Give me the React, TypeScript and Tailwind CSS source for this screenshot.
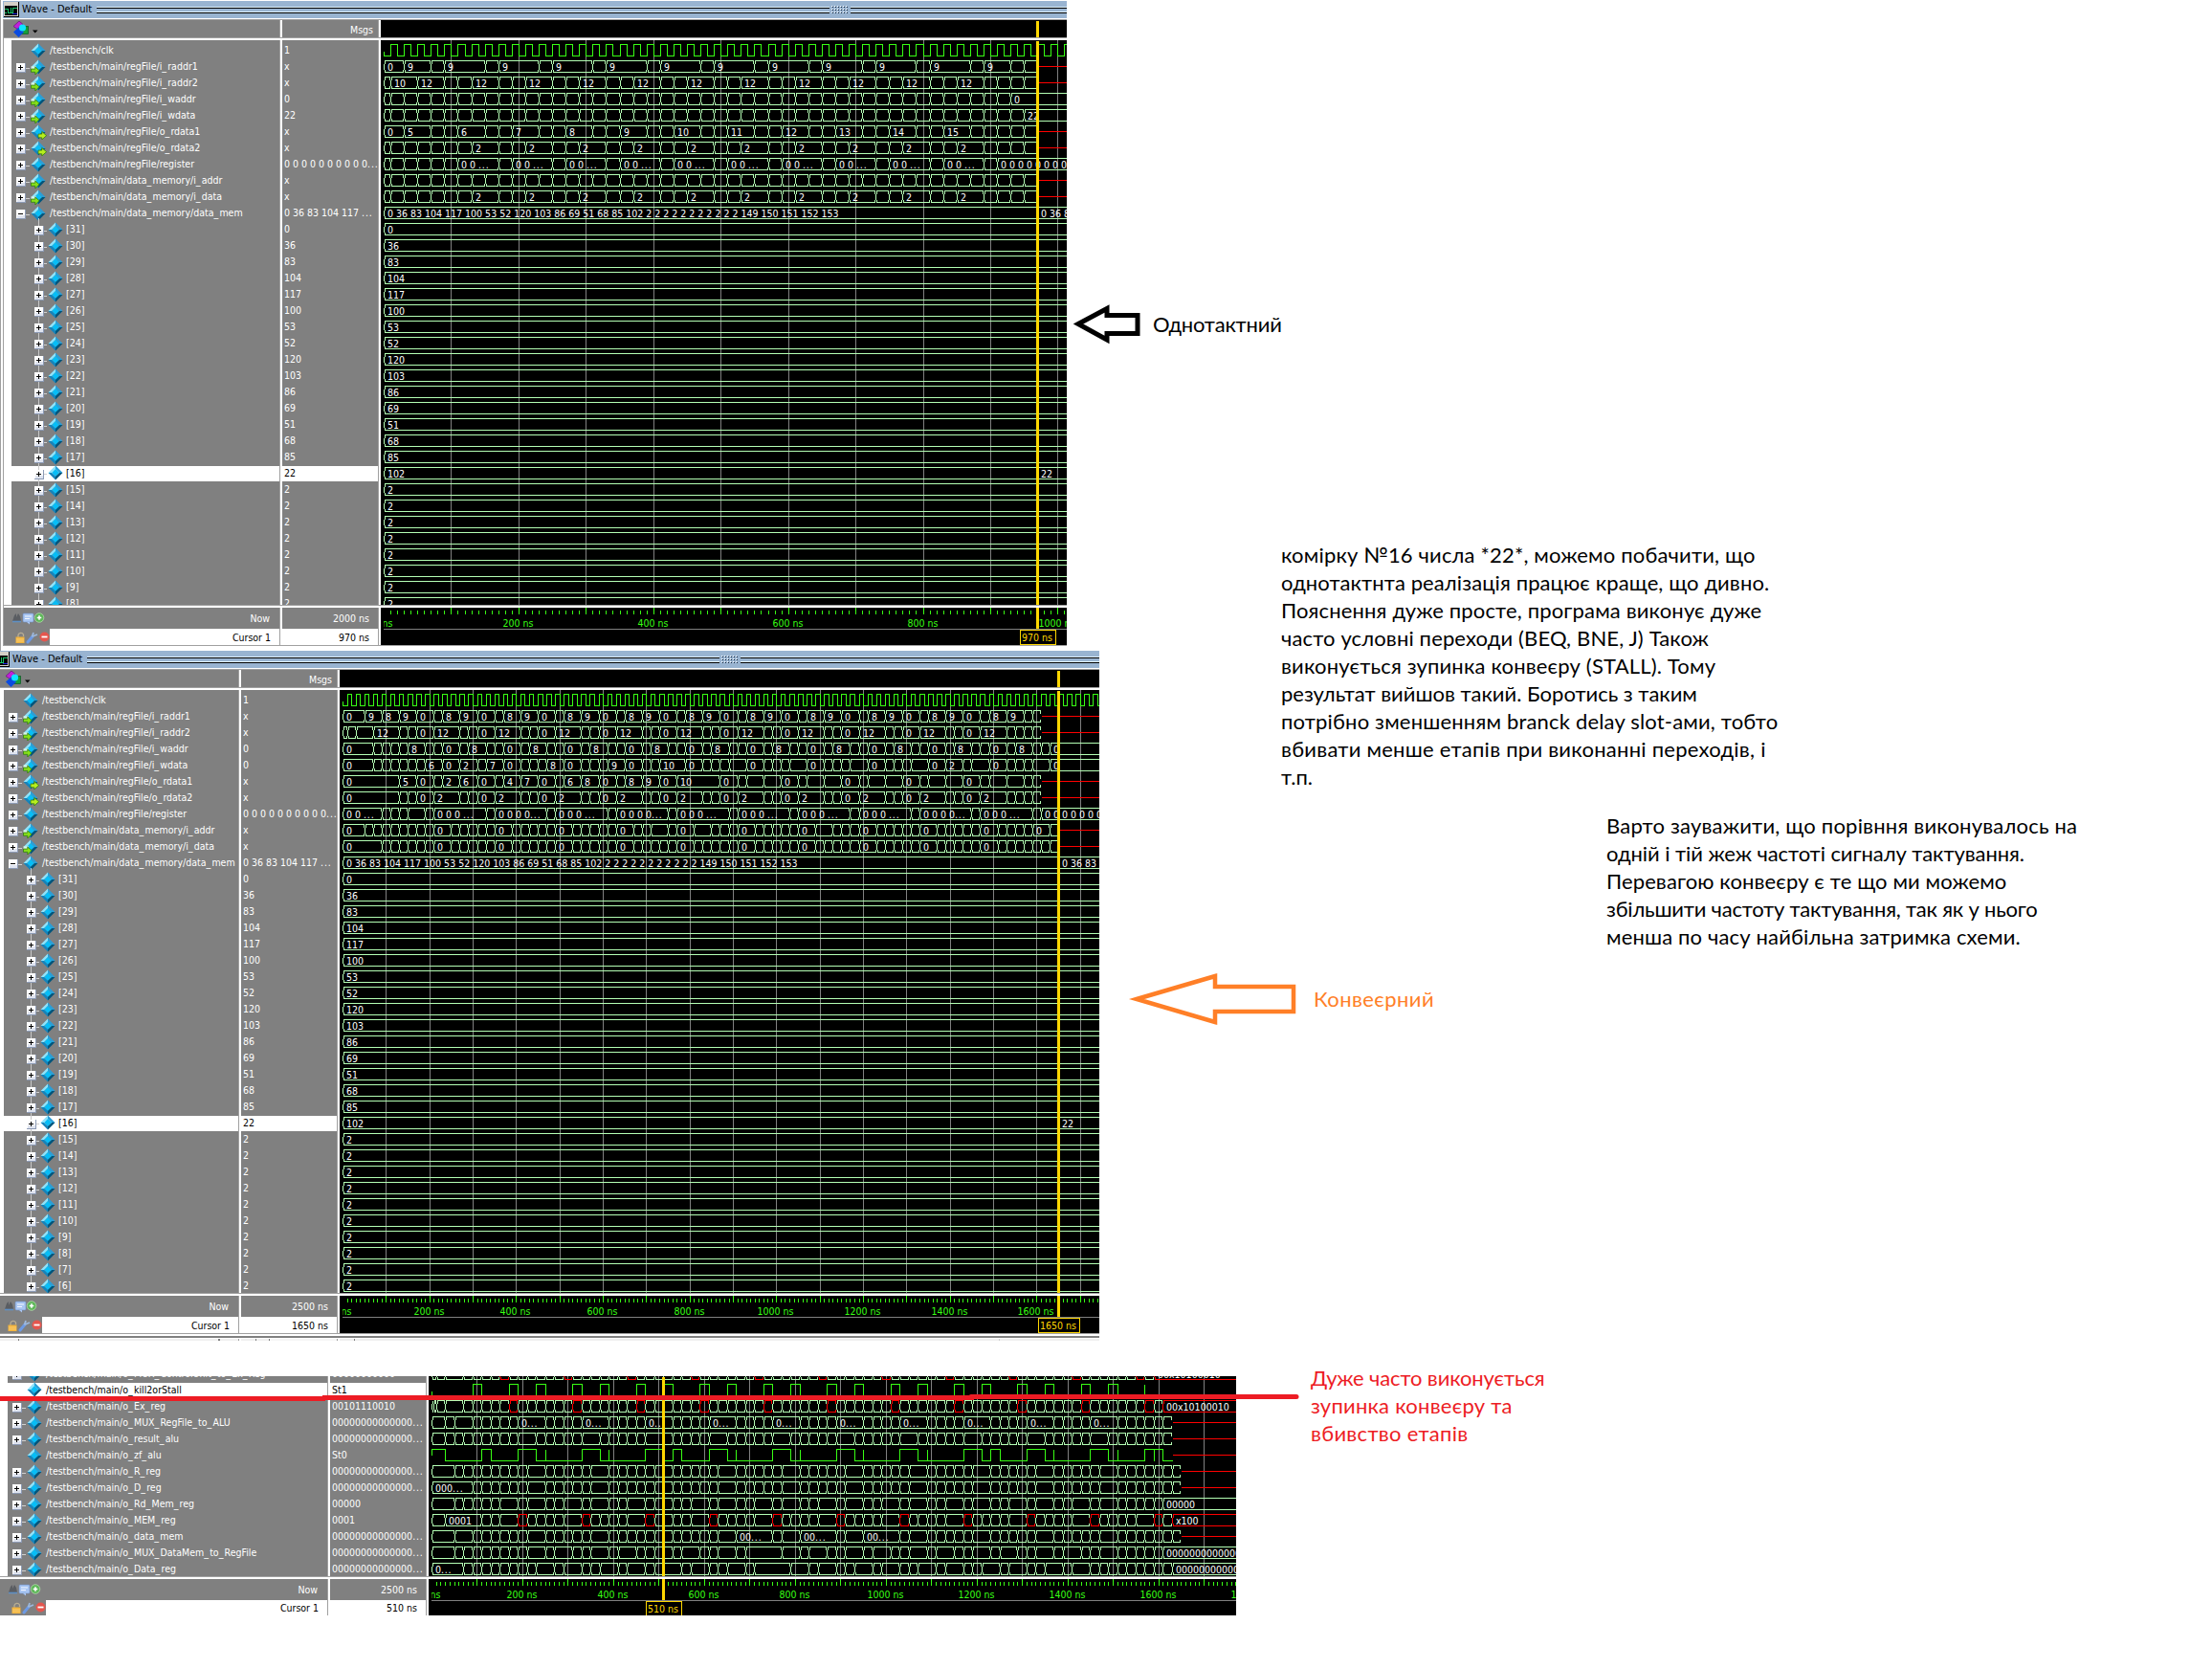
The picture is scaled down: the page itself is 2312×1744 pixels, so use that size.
import type { ReactNode } from "react";

/* ---------- shared types ---------- */

type Kind = "logic" | "in" | "out" | "plain" | "open" | "child";
type Signal = { name: string; value: string; kind: Kind; selected?: boolean };
type Cell = { t: number; label?: string; red?: boolean };
type Bus = { type: "bus"; cells: Cell[]; deadFrom?: number };
type Level = { type: "level"; edges: number[]; spikes?: number[]; start: number; end: number; deadFrom?: number };
type Wave = Bus | Level;

/* ---------- wave data helpers ---------- */

const bus = (
  times: number[],
  labels: Record<number, string> = {},
  deadFrom?: number,
  reds: number[] = [],
): Bus => ({
  type: "bus",
  deadFrom,
  cells: Array.from(new Set(times))
    .sort((a, b) => a - b)
    .map((t) => ({ t, label: labels[t], red: reds.includes(t) })),
});

const range = (from: number, to: number, step: number) => {
  const out: number[] = [];
  for (let t = from; t <= to; t += step) out.push(t);
  return out;
};
const repeat = (offsets: number[], from: number, to: number, period: number) =>
  range(from, to, period).flatMap((b) => offsets.map((o) => b + o));
const label = (times: number[], text: string) =>
  Object.fromEntries(times.map((t) => [t, text])) as Record<number, string>;
const without = (times: number[], drop: number[]) => times.filter((t) => !drop.includes(t));

const MEM = "0 36 83 104 117 100 53 52 120 103 86 69 51 68 85 102 2 2 2 2 2 2 2 2 2 2 2 149 150 151 152 153";
const MEM_VALUES = [0, 36, 83, 104, 117, 100, 53, 52, 120, 103, 86, 69, 51, 68, 85, 102, 2, 2, 2, 2, 2, 2, 2, 2, 2, 2];

const memSignals = (last: number): Signal[] =>
  range(0, 31 - last, 1).map((i) => ({
    name: `[${31 - i}]`,
    value: i === 15 ? "22" : String(MEM_VALUES[i]),
    kind: "child",
    selected: i === 15,
  }));
const memWaves = (last: number, changeAt: number): Wave[] =>
  range(0, 31 - last, 1).map((i) =>
    i === 15 ? bus([0, changeAt], { 0: "102", [changeAt]: "22" }) : bus([0], { 0: String(MEM_VALUES[i]) }),
  );

const cpuSignals = (waddr: string, wdata: string): Signal[] => [
  { name: "/testbench/clk", value: "1", kind: "logic" },
  { name: "/testbench/main/regFile/i_raddr1", value: "x", kind: "in" },
  { name: "/testbench/main/regFile/i_raddr2", value: "x", kind: "in" },
  { name: "/testbench/main/regFile/i_waddr", value: waddr, kind: "in" },
  { name: "/testbench/main/regFile/i_wdata", value: wdata, kind: "in" },
  { name: "/testbench/main/regFile/o_rdata1", value: "x", kind: "out" },
  { name: "/testbench/main/regFile/o_rdata2", value: "x", kind: "out" },
  { name: "/testbench/main/regFile/register", value: "0 0 0 0 0 0 0 0 0 0...", kind: "plain" },
  { name: "/testbench/main/data_memory/i_addr", value: "x", kind: "in" },
  { name: "/testbench/main/data_memory/i_data", value: "x", kind: "in" },
  { name: "/testbench/main/data_memory/data_mem", value: "0 36 83 104 117 ...", kind: "open" },
];

const clock = (end: number): Level => ({ type: "level", edges: range(10, end, 10), start: 0, end });

/* single-cycle core */
const read2 = [0, 10, ...repeat([0, 20, 40], 90, 850, 80), 890, 910, 930, 950];
const singleWaves: Wave[] = [
  clock(1020),
  bus([0, ...repeat([0, 20], 70, 870, 80), 30, 930, 950], { 0: "0", 30: "9", ...label(range(90, 890, 80), "9") }, 970),
  bus([...read2, 50], { 10: "10", 50: "12", ...label(range(130, 850, 80), "12") }, 970),
  bus([0, ...range(10, 930, 20)], { 930: "0" }),
  bus([0, ...range(10, 950, 20)], { 950: "22" }),
  bus(
    [0, 30, ...repeat([0, 20, 40], 70, 870, 80), 930, 950],
    {
      0: "0",
      30: "5",
      ...Object.fromEntries(range(0, 9, 1).map((k) => [110 + 80 * k, String(6 + k)])),
    },
    970,
  ),
  bus([...read2, 30, 50, 70], label(range(130, 850, 80), "2"), 970),
  bus([0, 10, 30, 50, 70, 90, ...repeat([0, 60], 110, 830, 80), 910], {
    ...label(range(110, 830, 80), "0 0 ..."),
    910: "0 0 0 0 0 0 0 0 0",
  }),
  bus([0, ...range(10, 950, 20)], {}, 970),
  bus([...read2, 30, 50, 70], label(range(130, 850, 80), "2"), 970),
  bus([0, 970], { 0: MEM, 970: "0 36 83 104" }),
  ...memWaves(8, 970),
];

/* pipelined core */
const pipeRead = [...repeat([0, 60, 80, 100], 70, 1330, 140), 1470, 1530, 1550, 1570, 1590];
const pipeWaves: Wave[] = [
  clock(1760),
  bus(
    [0, 50, ...repeat([0, 40, 80, 120], 90, 1350, 140), 1490, 1530, 1570, 1590],
    {
      0: "0",
      50: "9",
      ...label(range(90, 1490, 140), "8"),
      ...label(range(130, 1530, 140), "9"),
      ...label(range(170, 1430, 140), "0"),
    },
    1610,
  ),
  bus([0, 10, 30, ...pipeRead], { ...label(range(70, 1470, 140), "12"), ...label(range(170, 1430, 140), "0") }, 1610),
  bus([0, 70, 90, 110, 130, ...repeat([0, 40, 60, 80, 120], 150, 1410, 140), 1550, 1590, 1610, 1630], {
    0: "0",
    ...label(range(150, 1550, 140), "8"),
    ...label(range(230, 1490, 140), "0"),
    1630: "0",
  }),
  bus(
    [
      0, 70, 90, 110, 130, 150, 170, 190, 230, 270, 310, 330, 370, 410, 430, 450, 470, 510, 550, 570, 590, 610, 650,
      690, 710, 730, 790, 830, 850, 870, 890, 930, 970, 990, 1010, 1030, 1070, 1110, 1130, 1150, 1170, 1210, 1250,
      1270, 1290, 1310, 1350, 1390, 1430, 1450, 1490, 1530, 1550, 1570, 1590, 1630,
    ],
    {
      0: "0", 190: "6", 270: "2", 330: "7", 470: "8", 610: "9", 730: "10", 1390: "2", 1630: "0",
      ...label(range(230, 1490, 140), "0"),
    },
  ),
  bus(
    [
      0, 130, 170, 210, 230, 270, 310, 350, 370, 410, 450, 490, 510, 550, 590, 630, 650, 690, 730, 770, 870, 910, 930,
      970, 1010, 1050, 1070, 1110, 1150, 1190, 1210, 1250, 1290, 1330, 1350, 1390, 1430, 1470, 1490, 1530, 1570, 1590,
    ],
    {
      0: "0", 130: "5", 230: "2", 270: "6", 370: "4", 410: "7", 510: "6", 550: "8", 650: "8", 690: "9", 770: "10",
      ...label(range(170, 1430, 140), "0"),
    },
    1610,
  ),
  bus(
    [0, ...without(pipeRead, [70])],
    { 0: "0", ...label(range(210, 1470, 140), "2"), ...label(range(170, 1430, 140), "0") },
    1610,
  ),
  bus([0, 90, 110, 130, 150, 190, ...repeat([0, 120], 210, 1470, 140), 1610], {
    0: "0 0 ...",
    ...label(range(210, 1470, 140), "0 0 0 ..."),
    350: "0 0 0 0...",
    630: "0 0 0 0...",
    1330: "0 0 0 0...",
    1610: "0 0 0 0 0 0 0 0",
  }),
  bus(
    [0, ...without(range(50, 1630, 20), [...range(230, 1490, 140), 730, 830, 1110, 1610])],
    { 0: "0", ...label(range(210, 1470, 140), "0"), 1590: "0" },
    1650,
  ),
  bus(
    [0, ...without(range(90, 1630, 20), range(230, 1490, 140))],
    { 0: "0", ...label(range(210, 1470, 140), "0") },
    1650,
  ),
  bus([0, 1650], { 0: MEM, 1650: "0 36 83 104" }),
  ...memWaves(6, 1650),
];

/* pipeline registers */
const WORD = "00000000000000...";
const stageSignals: Signal[] = [
  { name: "/testbench/main/o_MUX_ControlUnit_to_Ex_Reg", value: "00000000000", kind: "plain" },
  { name: "/testbench/main/o_kill2orStall", value: "St1", kind: "logic", selected: true },
  { name: "/testbench/main/o_Ex_reg", value: "00101110010", kind: "plain" },
  { name: "/testbench/main/o_MUX_RegFile_to_ALU", value: WORD, kind: "plain" },
  { name: "/testbench/main/o_result_alu", value: WORD, kind: "plain" },
  { name: "/testbench/main/o_zf_alu", value: "St0", kind: "logic" },
  { name: "/testbench/main/o_R_reg", value: WORD, kind: "plain" },
  { name: "/testbench/main/o_D_reg", value: WORD, kind: "plain" },
  { name: "/testbench/main/o_Rd_Mem_reg", value: "00000", kind: "plain" },
  { name: "/testbench/main/o_MEM_reg", value: "0001", kind: "plain" },
  { name: "/testbench/main/o_data_mem", value: WORD, kind: "plain" },
  { name: "/testbench/main/o_MUX_DataMem_to_RegFile", value: WORD, kind: "plain" },
  { name: "/testbench/main/o_Data_reg", value: WORD, kind: "plain" },
];
const wide = (start: number) => range(start + 20, 1500, 140);
const stageWaves: Wave[] = [
  bus([0, 10, 30, ...range(70, 1590, 20)], { 1590: "00x10100010" }, undefined, [...range(150, 1550, 140), 1590]),
  { type: "level", start: 0, end: 1900, edges: repeat([0, 20, 80, 100], 90, 1350, 140).concat([1490, 1510]), spikes: [1570] },
  bus([0, 5, 10, 30, ...range(70, 1610, 20)], { 1610: "00x10100010" }, undefined, [...range(170, 1570, 140), 1610]),
  bus(
    [0, 30, 50, ...without(range(90, 1610, 20), [...range(210, 1490, 140), ...range(230, 1490, 140)])],
    label(range(190, 1450, 140), "0..."),
    1630,
  ),
  bus([0, ...without(range(30, 1610, 20), wide(190))], {}, 1630),
  {
    type: "level",
    start: 1,
    end: 1630,
    edges: [
      30, 110, 130, 190, 230, 330, 370, 470, 510, 530, 550, 610, 650, 750, 790, 890, 930, 1030, 1070, 1170, 1210, 1230,
      1250, 1310, 1350, 1450, 1490, 1570, 1610,
    ],
    spikes: [250, 390, 670, 810, 950, 1090, 1370, 1510, 1590],
    deadFrom: 1630,
  },
  bus([0, ...without(range(50, 1630, 20), wide(210))], {}, 1650),
  bus([0, ...without(range(90, 1630, 20), wide(210))], { 0: "000..." }, 1650),
  bus([0, ...without(range(50, 1610, 20), [...wide(210), ...wide(150)])], { 1610: "00000" }),
  bus([0, 30, ...without(range(110, 1630, 20), range(170, 1590, 140))], { 30: "0001", 1630: "x100" }, undefined, [
    ...range(190, 1590, 140),
    1630,
  ]),
  bus(
    [0, 50, ...without(range(90, 1630, 20), [...wide(210), 690, 710, 730, 830, 850, 870, 970, 990, 1010])],
    { 670: "00...", 810: "00...", 950: "00..." },
    1650,
  ),
  bus([0, ...without(range(50, 1610, 20), [...wide(210), ...wide(270), 730, 750])], { 710: "0...", 1610: "0000000000000000" }),
  bus([0, ...without(range(70, 1630, 20), [...wide(230), ...wide(290), 750, 770])], {
    0: "0...",
    730: "0...",
    1630: "0000000000000000",
  }),
];

/* ---------- icons ---------- */

const Diamond = ({ kind }: { kind: Kind }) => (
  <svg className="-mt-[2px] shrink-0" width="18" height="16" viewBox="0.6 0.6 16.8 14.9">
    <path d="M9 1 L9 4.6 L5.4 8 L2 8 Z" fill="#8fe3fb" />
    <path d="M9 1 L16 8 L12.6 8 L9 4.6 Z" fill="#2b9ed6" />
    <path d="M2 8 L5.4 8 L9 11.4 L9 15 Z" fill="#1583bb" />
    <path d="M16 8 L9 15 L9 11.4 L12.6 8 Z" fill="#00557c" />
    <path d="M9 4.4 L12.6 8 L9 11.6 L5.4 8 Z" fill="#07bdf6" />
    {kind === "in" && (
      <g>
        <path d="M2 7.5 H7 V10 H2 Z" fill="#d9f5e4" />
        <path d="M2 10 H6 V8 L10 11.5 L6 15.5 V13 H2 Z" fill="#86e01a" stroke="#2c7a0c" strokeWidth=".7" />
      </g>
    )}
    {kind === "out" && (
      <path d="M9 10 H12.5 V7.5 L17 11.5 L12.5 15.5 V13.5 H9 Z" fill="#b8ee1e" stroke="#2c7a0c" strokeWidth=".7" />
    )}
  </svg>
);

const Expander = ({ minus }: { minus?: boolean }) => (
  <svg className="shrink-0" width="10" height="10" viewBox="0 0 10 10" shapeRendering="crispEdges">
    <rect width="10" height="10" fill="#8d9bb5" />
    <rect width="9" height="9" fill="#ffffff" />
    <rect x="1" y="6" width="8" height="3" fill="#dfe4f0" />
    <rect x="2" y="4" width="5" height="1" fill="#000000" />
    {!minus && <rect x="4" y="2" width="1" height="5" fill="#000000" />}
  </svg>
);

const WaveIcon = () => (
  <svg className="shrink-0" width="16" height="16" viewBox="0 0 16 16" shapeRendering="crispEdges">
    <rect width="16" height="16" fill="#000000" />
    <rect width="15" height="15" fill="#d4d0c8" />
    <rect x="1" y="4" width="13" height="10" fill="#000000" />
    <path d="M1 7.5 H4.5 V11.5 H6.5 M7.5 6 V11.5 H9.5 V6.5 H13.5 M1 11.5 H3" stroke="#19c46b" fill="none" />
    <path d="M9 12.5 H14" stroke="#2222dd" />
  </svg>
);

const FilterIcon = () => (
  <svg className="shrink-0" width="26" height="17" viewBox="0 0 26 17">
    <path d="M6 0 L10 3.5 L4.5 8.5 L0 5.5 Z" fill="#c020d8" stroke="#5a0a68" strokeWidth=".6" />
    <rect x="8.5" y="5.5" width="7" height="8" fill="#16a038" stroke="#0b5a20" strokeWidth=".7" />
    <path d="M5.5 6.5 L11 11.5 L5.5 17 L0 11.5 Z" fill="#0a4be0" />
    <circle cx="9.5" cy="7" r="3.6" fill="#10e4ff" />
    <path d="M20 9.5 H25.5 L22.7 12.5 Z" fill="#000000" />
  </svg>
);

const NowIcons = () => (
  <svg width="36" height="14" viewBox="0 0 36 14">
    <path d="M1 10 L3 4 L5 2 V6 L7 2 L9 5 L10 10 Z" fill="#5a5d62" />
    <path d="M1 10.5 H10" stroke="#5f8fc4" strokeWidth="1.6" />
    <rect x="12" y="2" width="11" height="9" rx="1" fill="#a9c6f2" stroke="#6d8fc6" strokeWidth=".6" />
    <path d="M14 5 H21 M14 7.5 H19" stroke="#f4f8ff" />
    <path d="M16 11 L19 13.5 L19 11 Z" fill="#a9c6f2" />
    <circle cx="29" cy="6.5" r="4.8" fill="#5fb75a" stroke="#b7e0b0" strokeWidth=".7" />
    <path d="M29 4.2 V8.8 M26.7 6.5 H31.3" stroke="#ffffff" strokeWidth="1.6" />
  </svg>
);

const CursorIcons = () => (
  <svg width="37" height="14" viewBox="0 0 37 14">
    <path d="M4 7 V4.5 A3 3 0 0 1 9.5 4 V6" stroke="#b9ad92" strokeWidth="1.3" fill="none" />
    <rect x="1.5" y="6.5" width="9" height="6.5" fill="#f2b43c" />
    <path d="M2 9 H10 M2 11 H10" stroke="#ffd98a" strokeWidth=".7" />
    <path d="M14 12 L19 6" stroke="#6d9ae4" strokeWidth="3" strokeLinecap="round" />
    <path d="M18.5 6.5 L20 2 M19 6 L24 4" stroke="#9cb8dd" strokeWidth="1.8" />
    <circle cx="31.5" cy="6.5" r="5" fill="#e4564e" />
    <path d="M28.5 6.5 H34.5" stroke="#ffffff" strokeWidth="1.8" />
  </svg>
);

/* ---------- table parts ---------- */

const VSep = () => <div className="w-[3px] shrink-0 border-l border-[#a0a0a0] bg-white" />;
const HSep = () => <div className="h-[3px] shrink-0 border-t border-[#a0a0a0] bg-white" />;

/* Underscores and trailing dots are set a little wider than the font's own. */
const Spaced = ({ text }: { text: string }) => (
  <>
    {text.split(/(_|\.\.\.)/).map((part, i) =>
      part === "_" || part === "..." ? (
        <span key={i} className={part === "_" ? "tracking-[1.2px]" : "tracking-[0.8px]"}>
          {part}
        </span>
      ) : (
        part
      ),
    )}
  </>
);

const NameRow = ({ s, first, last }: { s: Signal; first?: boolean; last?: boolean }) => {
  const child = s.kind === "child";
  return (
    <div
      className={`flex h-[17px] shrink-0 items-center whitespace-pre ${child ? "pl-[24px]" : "pl-[5px]"} ${
        s.selected ? "border-b border-[#808080] bg-white text-black" : ""
      }`}
    >
      <div className="relative flex h-[17px] w-[10px] shrink-0 items-center">
        {child && (
          <div
            className={`absolute left-[4px] w-px bg-[#c8c8c8] ${first ? "-top-1" : "top-0"} ${last ? "bottom-2" : "bottom-0"}`}
          />
        )}
        <div className="relative mt-px">{s.kind !== "logic" && <Expander minus={s.kind === "open"} />}</div>
      </div>
      <div
        className={`mt-px h-px shrink-0 ${child ? "w-[3px]" : "w-[4px]"} ${s.kind === "logic" ? "" : "bg-[#d0d0d0]"}`}
      />
      <Diamond kind={s.kind} />
      <span className={`-mt-[3px] ${child ? "ml-[2px]" : "ml-[3px]"}`}>
        <Spaced text={s.name} />
      </span>
    </div>
  );
};

/* ---------- waveform ---------- */

type Scale = { x0: number; k: number };

const WaveView = ({
  width,
  height,
  firstRow,
  scale,
  waves,
  cursor,
  gridTo,
}: {
  width: number;
  height: number;
  firstRow: number;
  scale: Scale;
  waves: Wave[];
  cursor: number;
  gridTo: number;
}) => {
  const X = (t: number) => Math.round(scale.x0 + scale.k * t) + 0.5;
  let green = "";
  let red = "";
  let logic = "";
  let dead = "";
  const texts: ReactNode[] = [];
  waves.forEach((w, i) => {
    const top = firstRow + 17 * i + 1.5;
    const bot = top + 12;
    const mid = top + 6;
    if (w.type === "bus") {
      const stop = w.deadFrom !== undefined ? X(w.deadFrom) : width + 20;
      w.cells.forEach((c, j) => {
        const a = X(c.t);
        const b = j + 1 < w.cells.length ? X(w.cells[j + 1].t) : stop;
        const p =
          `M${a} ${mid - 3}V${mid + 3}M${a + 1} ${mid - 3}V${top}H${b - 1}V${mid - 3}` +
          `M${a + 1} ${mid + 3}V${bot}H${b - 1}V${mid + 3}`;
        if (c.red) red += p;
        else green += p;
        if (c.label) {
          const dots = c.label.endsWith("...");
          texts.push(
            <text key={`${i}-${j}`} x={a + 3.5} y={bot - 2}>
              {dots ? c.label.slice(0, -3) : c.label}
              {dots && <tspan className="tracking-[0.8px]">...</tspan>}
            </text>,
          );
        }
      });
    } else {
      let high = w.start === 1;
      logic += `M${X(0)} ${high ? mid : mid + 1}V${high ? top : bot}`;
      w.edges.forEach((e) => {
        logic += `H${X(e)}V${high ? bot : top}`;
        high = !high;
      });
      logic += `H${Math.min(X(w.end), width + 10)}`;
      (w.spikes ?? []).forEach((s) => {
        logic += `M${X(s)} ${top}V${bot}`;
      });
    }
    if (w.deadFrom !== undefined) dead += `M${X(w.deadFrom)} ${mid}H${width}`;
  });
  return (
    <svg className="block shrink-0 bg-black" width={width} height={height} shapeRendering="crispEdges">
      <path d={range(100, gridTo, 100).map((t) => `M${X(t)} 0V${height}`).join("")} stroke="#808080" />
      <path d={green} stroke="#b4ffb4" fill="none" />
      <path d={logic} stroke="#38ff14" fill="none" />
      <path d={dead} stroke="#ff0000" fill="none" />
      <path d={red} stroke="#ff0000" fill="none" />
      <g fill="#ffffff" className="text-[10.5px]">
        {texts}
      </g>
      <rect x={X(cursor) - 1.5} y="1" width="3" height={height} fill="#ffd700" />
    </svg>
  );
};

const Ruler = ({
  width,
  scale,
  cursor,
  to,
  height,
}: {
  width: number;
  scale: Scale;
  cursor: number;
  to: number;
  height: number;
}) => {
  const X = (t: number) => Math.round(scale.x0 + scale.k * t) + 0.5;
  const text = `${cursor} ns`;
  const w = text.length * 6 + 1;
  return (
    <svg className="block shrink-0 bg-black" width={width} height={height} shapeRendering="crispEdges">
      <path
        d={range(10, to, 10)
          .map((t) => `M${X(t)} ${t % 100 === 0 ? 0 : 3}V7`)
          .join("")}
        stroke="#38ff14"
      />
      <svg x={scale.x0} width={width - scale.x0} height={height}>
        <g fill="#38ff14" className="text-[10.5px]" textAnchor="middle">
          {range(0, to, 200).map((t) => (
            <text key={t} x={X(t) - scale.x0 - 1} y="20">{`${t} ns`}</text>
          ))}
        </g>
      </svg>
      <path d={`M${scale.x0} 22.5H${width}`} stroke="#808080" />
      <rect x={X(cursor) - 1.5} y="0" width="3" height="22" fill="#ffd700" />
      <rect x={X(cursor) - w / 2} y="23.5" width={w} height="15" fill="#000000" stroke="#ffd700" />
      <text x={X(cursor) - 0.5} y="35" textAnchor="middle" fill="#ffd700" className="text-[10.5px]">
        {text}
      </text>
    </svg>
  );
};

/* ---------- panel body shared by the three windows ---------- */

type BodyProps = {
  signals: Signal[];
  waves: Wave[];
  nameClass: string;
  gutterClass: string;
  bodyClass: string;
  padClass: string;
  waveWidth: number;
  height: number;
  firstRow: number;
  scale: Scale;
  cursor: number;
  to: number;
  now: string;
  footClass: string;
  nowIconClass: string;
  cursorIconClass: string;
  footHeight: number;
};

const Body = (p: BodyProps) => (
  <>
    <div className={`flex overflow-hidden ${p.bodyClass}`}>
      <div className={`shrink-0 overflow-hidden border-white bg-[#808080] ${p.nameClass} ${p.gutterClass}`}>
        <div className={`flex flex-col ${p.padClass}`}>
          {p.signals.map((s, i) => (
            <NameRow key={s.name} s={s} first={s.name === "[31]"} last={i === p.signals.length - 1} />
          ))}
        </div>
      </div>
      <VSep />
      <div className="w-[100px] shrink-0 overflow-hidden bg-[#808080]">
        <div className={`flex flex-col ${p.padClass}`}>
          {p.signals.map((s) => (
            <div
              key={s.name}
              className={`flex h-[17px] shrink-0 items-center whitespace-pre pl-[2px] ${
                s.selected ? "border-b border-[#808080] bg-white text-black" : ""
              }`}
            >
              <span className="-mt-[3px]">
                <Spaced text={s.value} />
              </span>
            </div>
          ))}
        </div>
      </div>
      <VSep />
      <WaveView
        width={p.waveWidth}
        height={p.height}
        firstRow={p.firstRow}
        scale={p.scale}
        waves={p.waves}
        cursor={p.cursor}
        gridTo={p.to}
      />
    </div>
    <HSep />
    <div className={`flex overflow-hidden ${p.footClass}`}>
      <div className={`flex shrink-0 flex-col ${p.nameClass}`}>
        <div className={`flex h-[22px] items-center justify-between bg-[#808080] pr-[10px] ${p.nowIconClass}`}>
          <NowIcons />
          <span>Now</span>
        </div>
        <div className="flex grow text-black">
          <div className={`flex shrink-0 items-center justify-end bg-[#808080] ${p.cursorIconClass}`}>
            <CursorIcons />
          </div>
          <div className="flex grow items-center justify-end bg-white pr-[9px]">Cursor 1</div>
        </div>
      </div>
      <VSep />
      <div className="flex w-[100px] shrink-0 flex-col text-right">
        <div className="flex h-[22px] items-center justify-end bg-[#808080] pr-[9px]">{p.now}</div>
        <div className="flex grow items-center justify-end bg-white pr-[9px] text-black">{p.cursor} ns</div>
      </div>
      <VSep />
      <Ruler width={p.waveWidth} scale={p.scale} cursor={p.cursor} to={p.to} height={p.footHeight} />
    </div>
  </>
);

const Rails = ({ className }: { className: string }) => (
  <div className={`flex h-[7px] flex-col justify-between ${className}`}>
    <div className="h-[2px] border-b border-black bg-[#e2f4ff]" />
    <div className="h-[2px] border-b border-black bg-[#e2f4ff]" />
  </div>
);

const TitleBar = ({ leftClass, gripClass }: { leftClass: string; gripClass: string }) => (
  <div className={`flex h-[18px] items-center overflow-hidden bg-[#99b4d1] text-black ${leftClass}`}>
    <WaveIcon />
    <span className="-mt-px ml-[3px] w-[78px] shrink-0 whitespace-nowrap text-[11px]">Wave - Default</span>
    <Rails className={`shrink-0 ${gripClass}`} />
    <svg className="mx-px shrink-0" width="20" height="8" shapeRendering="crispEdges">
      <path d="M1 .5H19M1 3.5H19M1 6.5H19" stroke="#ffffff" strokeDasharray="1 2" />
      <path d="M2 1.5H19M2 4.5H19M2 7.5H19" stroke="#1d2b3d" strokeDasharray="1 2" />
    </svg>
    <Rails className="grow" />
  </div>
);

const HeaderRow = ({
  nameClass,
  iconClass,
  waveWidth,
  cursorX,
}: {
  nameClass: string;
  iconClass: string;
  waveWidth: number;
  cursorX: number;
}) => (
  <>
    <div className="flex h-[18px]">
      <div className={`flex shrink-0 items-center bg-[#808080] ${nameClass} ${iconClass}`}>
        <FilterIcon />
      </div>
      <VSep />
      <div className="flex w-[100px] shrink-0 items-center justify-end bg-[#808080] pr-[5px] pt-[2px]">Msgs</div>
      <VSep />
      <svg className="block bg-black" width={waveWidth} height="18" shapeRendering="crispEdges">
        <rect x={cursorX} y="1" width="3" height="17" fill="#ffd700" />
      </svg>
    </div>
    <HSep />
  </>
);

/* ---------- annotations ---------- */

type NoteLine = [text: string, tracking: string];

const Note = ({ className, lines }: { className: string; lines: NoteLine[] }) => (
  <div className={`absolute whitespace-nowrap font-['Lato','Open_Sans',sans-serif] text-[22px] leading-[29px] ${className}`}>
    {lines.map(([text, tracking]) => (
      <p key={text} className={tracking}>
        {text}
      </p>
    ))}
  </div>
);

export default function App() {
  return (
    <main className="relative h-[1744px] w-[2312px] overflow-hidden bg-white font-['DejaVu_Sans_Condensed','DejaVu_Sans',sans-serif] text-[10.5px] leading-[14px] text-white [font-stretch:condensed]">
      {/* single-cycle run */}
      <section className="h-[680px] w-[1115px] border-l border-[#a0a0a0] pt-px">
        <div className="pl-[2px]">
          <TitleBar leftClass="w-[1112px] pl-px" gripClass="w-[766px]" />
          <div className="mt-px border-l border-t border-[#a0a0a0]">
            <HeaderRow nameClass="w-[288px]" iconClass="pl-[10px]" waveWidth={717} cursorX={685} />
            <Body
              signals={[...cpuSignals("0", "22"), ...memSignals(8)]}
              waves={singleWaves}
              nameClass="w-[288px]"
              gutterClass="border-l-8"
              bodyClass="h-[590px]"
              padClass="pt-[3px]"
              waveWidth={717}
              height={590}
              firstRow={3}
              scale={{ x0: 3, k: 0.7044 }}
              cursor={970}
              to={1010}
              now="2000 ns"
              footClass="h-[40px] border-b border-[#a0a0a0]"
              nowIconClass="pl-[8px]"
              cursorIconClass="w-[48px]"
              footHeight={39}
            />
          </div>
        </div>
      </section>

      {/* pipelined run */}
      <section className="h-[722px] w-[1149px]">
        <TitleBar leftClass="-ml-[6px] w-[1155px]" gripClass="w-[661px]" />
        <div className="mt-px border-t border-[#a0a0a0]">
          <HeaderRow nameClass="w-[249px]" iconClass="pl-[6px]" waveWidth={794} cursorX={750} />
          <Body
            signals={[...cpuSignals("0", "0"), ...memSignals(6)]}
            waves={pipeWaves}
            nameClass="w-[249px]"
            gutterClass="border-l-4"
            bodyClass="h-[630px]"
            padClass="pt-[3px]"
            waveWidth={794}
            height={630}
            firstRow={3}
            scale={{ x0: 3, k: 0.4534 }}
            cursor={1650}
            to={1750}
            now="2500 ns"
            footClass="h-[40px] border-b border-[#a0a0a0]"
            nowIconClass="pl-[4px]"
            cursorIconClass="w-[44px]"
            footHeight={39}
          />
          <div className="mt-[2px] flex h-[5px] border-t-2 border-[#808080] pt-px">
            <div className="w-[20px] border-r border-[#808080] bg-[#f0f0f0]" />
            <div className="w-[210px] border-r-2 border-[#808080] bg-[#f0f0f0]" />
            <div className="w-[19px] bg-[#f0f0f0]" />
            <VSep />
            <div className="w-[16px] border-r border-[#808080] bg-[#f0f0f0]" />
            <div className="w-[14px] border-r border-[#808080] bg-[#f0f0f0]" />
            <div className="w-[70px] bg-[#f6f6f6]" />
            <VSep />
            <div className="w-[16px] border-r border-[#808080] bg-[#f0f0f0]" />
            <div className="w-[674px] border-r border-[#d0d0d0] bg-[#f0f0f0]" />
            <div className="grow bg-[#f0f0f0]" />
          </div>
        </div>
      </section>

      {/* pipeline stage registers */}
      <section className="mt-[36px] w-[1292px]">
        <Body
          signals={stageSignals}
          waves={stageWaves}
          nameClass="w-[342px]"
          gutterClass="border-l-8"
          bodyClass="h-[209px]"
          padClass="-mt-[10px]"
          waveWidth={844}
          height={209}
          firstRow={-10}
          scale={{ x0: 3, k: 0.4748 }}
          cursor={510}
          to={1800}
          now="2500 ns"
          footClass="h-[38px]"
          nowIconClass="pl-[8px]"
          cursorIconClass="w-[48px]"
          footHeight={38}
        />
      </section>

      {/* drawn annotations */}
      <svg className="absolute left-0 top-[1450px]" width="1370" height="20">
        <path d="M0 11.5H340" stroke="#ed1c24" strokeWidth="5" />
        <path d="M337 10.5H1018" stroke="#ed1c24" strokeWidth="5" />
        <path d="M1015 9.5H1355" stroke="#ed1c24" strokeWidth="5" strokeLinecap="round" />
      </svg>
      <svg className="absolute left-[1120px] top-[312px]" width="76" height="52">
        <path d="M7 26.5 L37 10.5 V17.5 H69 V36.5 H37 V43 Z" fill="none" stroke="#000000" strokeWidth="5" />
      </svg>
      <svg className="absolute left-[1178px] top-[1011px]" width="180" height="66">
        <path d="M10 33 L92 9 V20 H174 V46 H92 V57 Z" fill="none" stroke="#ff7f27" strokeWidth="4.5" />
      </svg>

      <Note className="left-[1205px] top-[324px] text-black" lines={[["Однотактний", "tracking-[-0.2px]"]]} />
      <Note
        className="left-[1339px] top-[564.5px] text-black"
        lines={[
          ["комірку №16 числа *22*, можемо побачити, що", "tracking-[0.17px]"],
          ["однотактнта реалізація працює краще, що дивно.", "tracking-[0.1px]"],
          ["Пояснення дуже просте, програма виконує дуже", "tracking-[0.16px]"],
          ["часто условні переходи (BEQ, BNE, J) Також", "tracking-[0.14px]"],
          ["виконується зупинка конвеєру (STALL). Тому", "tracking-[0.17px]"],
          ["результат вийшов такий. Боротись з таким", "tracking-normal"],
          ["потрібно зменшенням branck delay slot-ами, тобто", "tracking-[0.18px]"],
          ["вбивати менше етапів при виконанні переходів, і", "tracking-[0.25px]"],
          ["т.п.", "tracking-normal"],
        ]}
      />
      <Note
        className="left-[1679px] top-[848px] text-black"
        lines={[
          ["Варто зауважити, що порівння виконувалось на", "tracking-[0.2px]"],
          ["одній і тій жеж частоті сигналу тактування.", "tracking-[-0.07px]"],
          ["Перевагою конвеєру є те що ми можемо", "tracking-[0.12px]"],
          ["збільшити частоту тактування, так як у нього", "tracking-[-0.2px]"],
          ["менша по часу найбільна затримка схеми.", "tracking-[0.15px]"],
        ]}
      />
      <Note className="left-[1373px] top-[1029px] text-[#ff7f27]" lines={[["Конвеєрний", "tracking-[0.4px]"]]} />
      <Note
        className="left-[1370px] top-[1425px] text-[#ed1c24]"
        lines={[
          ["Дуже часто виконується", "tracking-[-0.13px]"],
          ["зупинка конвеєру та", "tracking-[0.23px]"],
          ["вбивство етапів", "tracking-[0.3px]"],
        ]}
      />
    </main>
  );
}
